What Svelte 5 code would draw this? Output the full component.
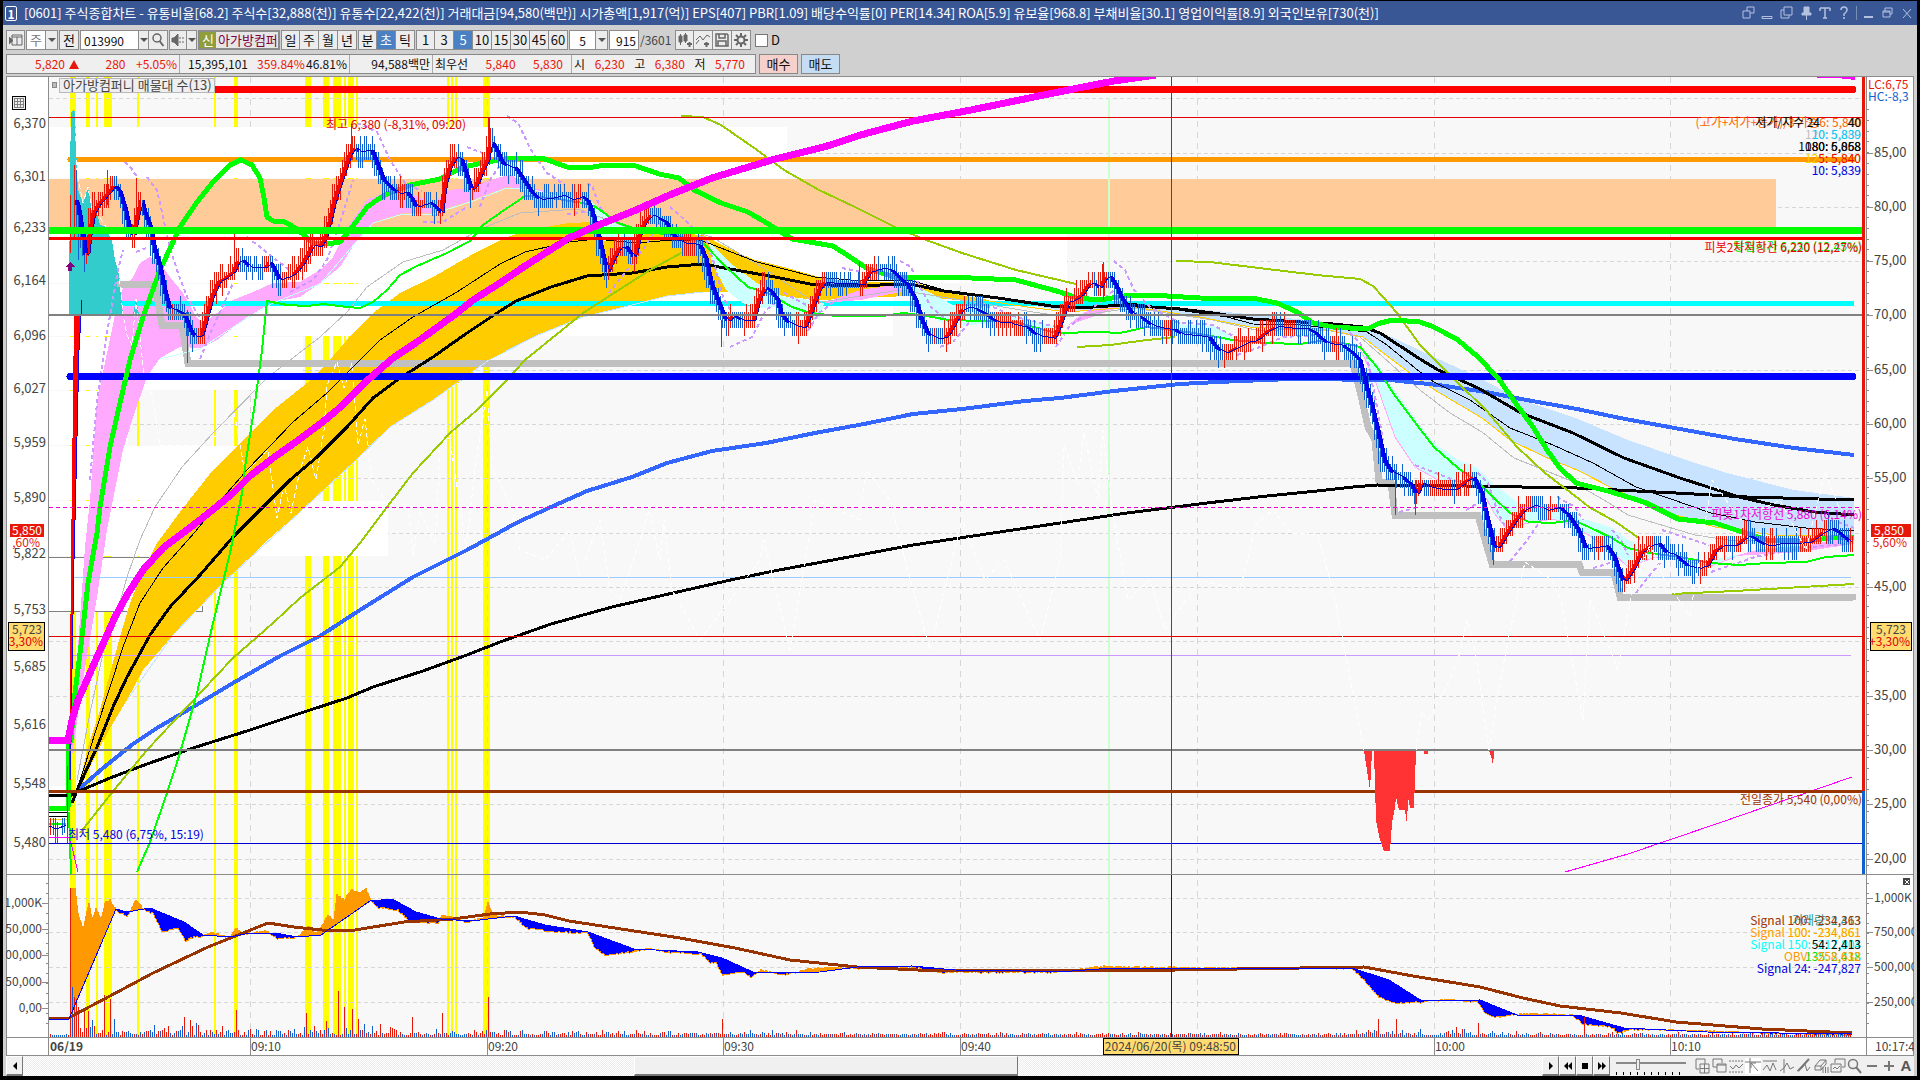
<script>
  const parse = (s) => s.trim().split(/\s+/).map((p) => p.split(',').map(Number));

  function at(points, x) {
    for (let i = 1; i < points.length; i++) {
      if (x <= points[i][0]) {
        const [x0, y0] = points[i - 1];
        const [x1, y1] = points[i];
        return x1 === x0 ? y1 : y0 + ((y1 - y0) * (x - x0)) / (x1 - x0);
      }
    }
    return points[points.length - 1][1];
  }

  const noise = (n) => {
    const v = Math.sin(n * 127.1 + 11.7) * 43758.5453;
    return v - Math.floor(v);
  };

  const price = parse(`75,200 78,215 82,240 85,262 88,235 92,213 98,203 108,192 113,185 118,191 123,207 128,228 132,235 137,210 140,200 144,215 149,228 153,250 158,265 163,290 168,308 175,310 183,315 188,328 193,337 200,335 205,317 210,298 217,282 225,277 232,272 236,262 241,260 248,267 264,267 268,262 272,268 278,280 285,277 293,273 300,265 306,255 311,245 318,247 323,240 328,222 333,200 338,185 343,170 348,155 353,147 358,152 365,150 370,150 376,165 382,180 390,188 396,193 405,192 410,198 415,208 420,205 428,202 435,208 440,213 443,185 448,168 454,157 460,160 465,175 470,190 475,185 480,172 486,160 489,140 495,150 501,163 507,167 513,167 521,178 530,192 537,199 548,198 560,195 570,200 580,196 587,202 593,220 598,240 603,262 606,272 612,258 618,248 624,246 629,253 633,258 638,235 643,222 650,215 657,218 664,222 670,232 676,240 682,243 690,243 698,245 704,258 710,285 717,302 723,318 727,322 731,315 740,320 752,320 757,300 764,287 770,292 776,300 780,315 786,322 795,326 803,328 810,310 817,290 823,282 835,283 850,283 861,285 868,272 880,268 890,270 898,278 906,285 914,300 920,320 927,335 935,338 945,337 952,325 960,310 967,307 975,309 985,315 995,322 1005,322 1015,325 1025,327 1035,335 1045,337 1053,338 1060,320 1066,302 1072,300 1080,295 1087,284 1092,283 1098,288 1104,278 1109,276 1115,287 1121,300 1130,313 1140,318 1150,325 1160,328 1172,329 1180,334 1195,335 1207,337 1217,350 1225,353 1233,348 1245,342 1255,340 1265,332 1275,326 1290,328 1305,328 1315,334 1325,343 1340,345 1350,352 1358,360 1363,380 1370,405 1376,430 1383,462 1390,472 1402,478 1410,485 1415,495 1420,483 1428,487 1440,489 1455,489 1463,482 1472,477 1480,493 1486,520 1492,545 1496,548 1503,537 1512,523 1522,510 1532,505 1545,510 1557,507 1567,515 1577,530 1584,548 1593,547 1605,545 1613,558 1620,578 1623,582 1632,568 1640,552 1650,545 1657,543 1664,552 1675,556 1686,566 1697,568 1706,565 1714,550 1722,545 1735,545 1747,535 1755,540 1765,546 1780,543 1795,543 1808,542 1820,533 1830,528 1838,533 1848,542 1854,541`);

  // One price tick is eight units high, so candles snap to that step
  let upBars = '';
  let downBars = '';
  let upFill = '';
  let downFill = '';
  let fastLine = '';
  for (let x = 76; x <= 1853; x += 2) {
    const y = at(price, x);
    const slope = at(price, x + 3) - at(price, x - 3);
    const reach = 7 + Math.abs(slope) * 0.3;
    const top = Math.round((y - reach - (noise(x) > 0.7 ? 6 : 0)) / 8) * 8;
    const bottom = Math.round((y + reach + (noise(x + 0.5) > 0.7 ? 6 : 0)) / 8) * 8;
    const bar = `M${x}.5 ${top}V${bottom}`;
    const isUp = Math.abs(slope) < 2 ? noise(Math.floor(x / 12)) > 0.5 : slope < 0;
    if (isUp) upBars += bar;
    else downBars += bar;
    const lag = at(price, Math.max(75, x - 4));
    const seg = `M${x} ${y.toFixed(0)}V${lag.toFixed(0)}`;
    if (y < lag - 2) upFill += seg;
    else if (y > lag + 2) downFill += seg;
    fastLine += `${x},${lag.toFixed(0)} `;
  }
  // Session extremes that reach beyond the regular candles
  upBars += 'M70.5 195V253M74.5 165V240M234.5 233V262M351.5 124V160M107.5 170V205M136.5 178V215M488.5 117V160M859.5 262V284M1103.5 262V300';
  downBars += 'M76.5 170V230M78.5 220V260M187.5 310V363M489.5 118V165M721.5 320V347M1395.5 470V515M1415.5 480V515M1493.5 530V565';

  const signal = parse(`49,1019 69,1019 116,909 127,912 150,908 184,922 203,935 230,937 245,934 275,933 297,937 321,935 370,901 392,899 416,912 441,919 471,921 514,916 545,925 588,932 634,949 698,952 722,958 753,972 784,973 820,972 857,967 912,966 955,970 1021,971 1058,972 1113,968 1352,968 1389,980 1422,1001 1480,1000 1517,1015 1578,1015 1624,1028 1707,1032 1851,1034`);
  const obv = parse(`49,1019 69,1019 70,888 75,888 78,913 83,930 89,902 92,920 96,908 101,920 105,903 110,900 116,910 127,917 136,900 144,910 153,913 162,932 178,928 186,942 190,938 203,936 211,932 230,938 236,927 242,934 266,931 276,938 294,938 300,935 309,925 315,933 321,927 328,915 334,920 337,895 344,900 352,889 358,893 366,888 370,899 377,907 398,910 410,922 438,923 442,915 459,919 467,923 484,917 488,902 493,915 514,917 527,928 557,932 588,933 594,947 605,955 631,952 649,948 667,952 701,954 710,963 716,962 722,975 744,972 751,977 761,970 784,975 808,969 833,967 857,968 912,967 943,972 1021,972 1058,972 1105,966 1125,967 1352,968 1367,983 1379,997 1395,1003 1422,1002 1450,999 1477,1002 1487,1015 1499,1017 1514,1015 1529,1013 1572,1015 1583,1024 1612,1027 1618,1033 1633,1029 1716,1031 1762,1033 1851,1035`);
  let obvUp = '';
  let obvDown = '';
  let obvLine = '';
  for (let x = 70; x < 1852; x++) {
    const a = at(obv, x) + (noise(x) - 0.5) * 2;
    const b = at(signal, x);
    if (a < b - 0.5) obvUp += `M${x}.5 ${a.toFixed(0)}V${b.toFixed(0)}`;
    else if (a > b + 0.5) obvDown += `M${x}.5 ${b.toFixed(0)}V${a.toFixed(0)}`;
    obvLine += `${x},${a.toFixed(0)} `;
  }

  const volumePeaks = { 72: 50, 74: 40, 76: 38, 78: 30, 84: 28, 88: 26, 104: 42, 110: 38, 184: 20, 236: 27, 306: 24, 326: 16, 338: 46, 344: 30, 352: 28, 358: 18, 412: 20, 442: 24, 488: 40, 722: 18, 1378: 18, 1396: 18, 1478: 14, 1584: 20 };
  let volUp = '';
  let volDown = '';
  for (let x = 50; x < 1852; x += 2) {
    const busy = x < 70 ? 1 : x < 200 ? 12 : x < 400 ? 8 : x < 800 ? 4 : x > 1355 && x < 1520 ? 5 : 2;
    const h = volumePeaks[x] ?? 2 + Math.round(noise(x) * noise(x + 3) * busy * 1.6);
    const bar = `M${x}.5 ${1037 - h}V1037`;
    if (noise(x + 9) > 0.5 || (volumePeaks[x] && x > 100)) volUp += bar;
    else volDown += bar;
  }

  const stripes = [[70, 6], [86, 4], [96, 2], [104, 8], [137, 2], [214, 2], [234, 4], [305, 6], [323, 6], [333, 8], [344, 2], [348, 6], [356, 2], [447, 2], [451, 2], [455, 2], [483, 7]];
  const profile = [[127, 51, 787], [228, 55, 1067], [284, 52, 893], [337, 53, 303], [391, 54, 128], [446, 54, 303], [501, 55, 388], [557, 54, 202]];
  const gridY = [98, 153, 207, 261, 370, 424, 478, 533, 587, 641, 696, 804, 859, 898, 932, 967, 1002];
  const gridX = [250, 487, 723, 960, 1197, 1434, 1670];

  const leftAxis = [['6,370', 124], ['6,301', 177], ['6,233', 228], ['6,164', 281], ['6,096', 336], ['6,027', 389], ['5,959', 443], ['5,890', 498], ['5,822', 554], ['5,753', 610], ['5,685', 667], ['5,616', 725], ['5,548', 784], ['5,480', 843]];
  const rightAxis = [['85,00', 153], ['80,00', 207], ['75,00', 261], ['70,00', 315], ['65,00', 370], ['60,00', 424], ['55,00', 478], ['45,00', 587], ['35,00', 696], ['30,00', 750], ['25,00', 804], ['20,00', 859]];
  const lowerLeft = [['1,000K', 903], ['50,000', 929], ['00,000', 955], ['50,000', 982], ['0,00', 1008]];
  const lowerRight = [['1,000K', 898], ['750,000', 932], ['500,000', 967], ['250,000', 1002]];
  const times = [['09:10', 251], ['09:20', 488], ['09:30', 724], ['09:40', 961], ['10:00', 1435], ['10:10', 1671]];
  const minorRight = Array.from({ length: 72 }, (_, i) => 109 + i * 10.8).filter((y) => y < 874).map(Math.round);
  const minorLower = Array.from({ length: 15 }, (_, i) => 883 + i * 10);

  const sar = [
    '125,162 131,168 137,177', '147,177 157,190 163,217 170,248 177,270 187,297 200,318', '247,237 288,269', '357,123 377,132 390,160 405,183 422,191',
    '467,147 482,153', '200,359 213,327 227,297 233,283', '290,292 313,280 327,260 340,223 353,180', '423,222 443,222 467,207', '90,480 97,403 107,333 118,270 123,250',
    '136,252 146,248', '507,116 518,123 531,150 547,173 565,185', '567,214 585,212', '480,207 490,180 500,165', '587,184 592,185 596,197 603,213', '609,293 627,270 645,247 660,222',
    '670,207 685,220 708,243 716,270 723,297 730,310', '730,347 752,337 766,310 779,300', '784,293 810,307', '808,331 819,313 837,300', '842,268 862,272',
    '900,261 911,267 920,287 931,307 949,322', '940,347 953,342 971,320', '979,307 993,307 1016,317 1056,327', '1056,347 1069,327 1087,313 1114,290',
    '1114,261 1125,270 1134,290 1150,307 1180,323', '1175,322 1213,325 1237,338', '1237,355 1260,347 1283,337 1320,335', '1350,333 1360,343 1367,357 1377,407 1383,440',
    '1415,465 1456,481', '1399,512 1415,508', '1466,510 1478,503', '1478,473 1488,483 1498,513 1506,528', '1510,561 1525,543 1541,520', '1557,497 1575,507 1583,520',
    '1593,568 1610,563', '1612,530 1621,540 1628,555', '1636,593 1648,577 1660,563', '1662,530 1709,545', '1711,572 1755,557 1802,548 1854,543', '1838,522 1854,528',
  ];

  const olive = [
    '80,833 110,795 147,750 187,707 233,658 273,623 300,598 340,567 360,543 387,507 413,473 450,433 477,410 507,380 525,360 583,313 614,293 650,270 681,253',
    '681,116 703,117 721,125 757,150 784,170 819,190 855,207 895,227 926,240 962,253 1016,270 1076,284',
    '1077,347 1110,345 1147,340 1175,337',
    '1176,261 1210,262 1267,269 1317,275 1360,279 1373,286 1383,297 1397,313 1420,345 1458,383 1486,410 1517,447 1545,473 1579,499 1589,507 1616,522 1640,539',
    '1672,594 1735,591 1802,587 1854,584',
  ];

  const cyanClouds = [
    '583,195 600,208 615,223 636,232 636,238 618,241 603,241 596,225',
    '708,240 730,263 757,283 784,297 810,300 824,303 820,318 810,322 792,320 779,307 757,308 743,303 726,290 712,263',
    '909,283 931,293 953,305 1016,317 1056,327 1064,315 1060,335 1047,337 993,323 949,327 926,313 909,290',
    '1127,305 1160,320 1187,325 1213,325 1233,337 1267,337 1267,341 1233,343 1213,337 1187,332 1160,326',
    '1347,337 1360,350 1377,363 1393,388 1420,425 1434,443 1458,460 1478,468 1494,485 1498,487 1517,502 1537,507 1561,507 1577,517 1597,523 1612,528 1628,540 1656,552 1688,560 1711,560 1751,552 1735,557 1711,566 1680,560 1656,557 1640,563 1628,567 1612,552 1593,538 1573,525 1553,519 1529,523 1506,528 1494,513 1482,490 1474,482 1438,480 1415,467 1395,437 1375,380 1359,347',
  ];

  const titleText = '[0601] 주식종합차트 - 유통비율[68.2] 주식수[32,888(천)] 유통수[22,422(천)] 거래대금[94,580(백만)] 시가총액[1,917(억)] EPS[407] PBR[1.09] 배당수익률[0] PER[14.34] ROA[5.9] 유보율[968.8] 부채비율[30.1] 영업이익률[8.9] 외국인보유[730(천)]';
  const periods = ['일', '주', '월', '년'];
  const units = ['분', '초', '틱'];
  const intervals = ['1', '3', '5', '10', '15', '30', '45', '60'];
</script>

<div class="app">
  <header class="title">
    <span class="badge">1</span>
    <h1>{titleText}</h1>
    <div class="win">
      <svg width="14" height="14" viewBox="0 0 14 14"><path d="M5 1h7v6h-4M1 5h7v7h-7zM5 1v4" /></svg>
      <svg width="14" height="14" viewBox="0 0 14 14"><path d="M1 10.5h10v2h-10z" /></svg>
      <svg width="14" height="14" viewBox="0 0 14 14"><path d="M4 1h8v8h-8zM4 4h-3v8h8v-3" /></svg>
      <svg width="14" height="14" viewBox="0 0 14 14"><path d="M5 1h5v6h2v2h-9v-2h2zM7.500 9v5" class="solid" /></svg>
      <svg width="14" height="14" viewBox="0 0 14 14"><path d="M2 2h10M7 2v10M2 2v3M12 2v3M5 12h4" class="mid" /></svg>
      <svg width="14" height="14" viewBox="0 0 14 14"><path d="M4 4q0-3 3-3t3 3q0 2-3 4v2M7 11v2" class="mid" /></svg>
      <i></i>
      <svg width="14" height="14" viewBox="0 0 14 14"><path d="M2 11h9" class="heavy" /></svg>
      <svg width="14" height="14" viewBox="0 0 14 14"><path d="M4 5v-3h7v6h-2M2 5h7v6h-7zM2 6h7" /></svg>
      <svg width="14" height="14" viewBox="0 0 14 14"><path d="M3 3l8 9M11 3l-8 9" /></svg>
    </div>
  </header>

  <nav class="tools">
    <button class="b w19" aria-label="패널"><svg width="14" height="14" viewBox="0 0 14 14"><path d="M3 2h10v10h-10zM3 4h10M8 4v8" /><path d="M0 4l4 3.500l-4 3.500z" class="fill" /></svg></button>
    <div class="group">
      <button class="b w20 white dim">주</button><button class="b w12" aria-label="주 선택"><span class="caret"></span></button>
    </div>
    <button class="b w20">전</button>
    <div class="group">
      <input class="code" value="013990" aria-label="종목코드" /><button class="b w11" aria-label="종목 목록"><span class="caret"></span></button>
      <button class="b w19" aria-label="검색"><svg width="14" height="14" viewBox="0 0 14 14"><circle cx="6" cy="5" r="4" class="mid" /><path d="M8.500 8l4 5" class="heavy" /></svg></button>
    </div>
    <div class="group">
      <button class="b w18" aria-label="소리"><svg width="14" height="14" viewBox="0 0 14 14"><path d="M1 5h2l4-4v12l-4-4h-2z" class="fill" /><path d="M9 4v6M12 4v6" stroke-dasharray="2 2" /></svg></button><button class="b w11" aria-label="소리 선택"><span class="caret"></span></button>
    </div>
    <button class="stock"><em>신</em><span>아가방컴퍼</span></button>
    <div class="group">{#each periods as p}<button class="b w19">{p}</button>{/each}</div>
    <div class="group">{#each units as u}<button class="b w19" class:on={u === '초'}>{u}</button>{/each}</div>
    <div class="group">{#each intervals as n}<button class="b w19" class:on={n === '5'}>{n}</button>{/each}</div>
    <div class="group"><input class="num" value="5" aria-label="간격" /><button class="b w12" aria-label="간격 목록"><span class="caret"></span></button></div>
    <input class="count" value="915" aria-label="봉 개수" /><span class="total">/3601</span>
    <div class="group icons">
      <button class="b w19" aria-label="캔들"><svg width="16" height="14" viewBox="0 0 16 14"><path d="M2 3h3v6h-3zM7 2h3v6h-3zM3.500 1v11M8.500 0v10" class="fill" /><path d="M10 11h5M12.500 9v5" class="heavy" /></svg></button>
      <button class="b w19" aria-label="지표"><svg width="16" height="14" viewBox="0 0 16 14"><path d="M1 7l4-4 3 4 4-5 3 2M1 11l3-4" /><path d="M9 11h5M11.500 9v5" class="heavy" /></svg></button>
      <button class="b w19" aria-label="저장"><svg width="14" height="14" viewBox="0 0 14 14"><path d="M1 1h11l1 1v11h-12zM4 1v4h6v-4M3 13v-5h8v5" class="mid" /></svg></button>
      <button class="b w19" aria-label="설정"><svg width="14" height="14" viewBox="0 0 14 14"><circle cx="7" cy="7" r="3.500" class="heavy" /><path d="M7 0v3M7 11v3M0 7h3M11 7h3M2 2l2 2M10 10l2 2M12 2l-2 2M4 10l-2 2" class="heavy" /></svg></button>
    </div>
    <label class="check"><input type="checkbox" />D</label>
  </nav>

  <section class="quotes">
    <div class="strip">
      <div class="cell c1 red"><span class="last">5,820<b class="tri"></b></span><span class="chg">280</span><span>+5.05%</span></div>
      <div class="cell c2"><span class="vol">15,395,101</span><span class="red">359.84%</span><span>46.81%</span></div>
      <div class="cell c3"><span>94,588백만</span></div>
      <div class="cell c4"><span>최우선</span><span class="red">5,840</span><span class="red">5,830</span></div>
      <div class="cell c5"><span>시</span><span class="red">6,230</span><span>고</span><span class="red">6,380</span><span>저</span><span class="red">5,770</span></div>
    </div>
    <button class="buy">매수</button>
    <button class="sell">매도</button>
  </section>

  <main>
    <svg class="chart" viewBox="6 76 1908 980" role="img" aria-label="아가방컴퍼니 차트">
      <defs>
        <clipPath id="plot"><rect x="49" y="77" width="1814" height="797" /></clipPath>
      </defs>
      <rect x="6" y="76" width="1908" height="980" fill="#fff" />
      <rect x="49" y="77" width="1817" height="961" fill="#f8f8f8" />

      <g fill="#ff0">{#each stripes as [x, w]}<rect {x} y="77" width={w} height="961" />{/each}</g>
      <g stroke="#d6d6d6" stroke-dasharray="4 3">{#each gridY as y}<path d="M49 {y}.5H1862" />{/each}</g>
      <g stroke="#d6d6d6" stroke-dasharray="6 5">{#each gridX as x}<path d="M{x}.5 77V1038" />{/each}</g>
      <g fill="#fff">{#each profile as [y, h, r]}<rect x="49" {y} width={r - 49} height={h} />{/each}</g>
      <rect x="49" y="786" width="19" height="56" fill="#fff" />
      <path d="M49 557.500H150M49 611.500H202.500V606" class="gray" />
      <rect x="49" y="179" width="1727" height="48" fill="#ffcc99" />
      <rect x="1108" y="98" width="2" height="940" fill="#ccffcc" />

      <g clip-path="url(#plot)">
        <path d="M69 89.500H1853" stroke="#f00" stroke-width="7" stroke-linecap="round" />
        <path d="M70 159.500H1853" stroke="#ff9900" stroke-width="5" stroke-linecap="round" />

        <path class="pink" d="M72 747L78 647L85 547L90 500L97 403L107 353L115 315L123 287L133 277L140 263L150 257L160 263L170 277L183 293L197 318L203 323L217 313L233 300L253 292L273 283L300 282L320 270L333 257L350 223L367 200L383 193L410 193L433 203L450 190L467 188L500 177L511 175L520 180L534 188L565 197L565 200L534 190L507 187L480 197L473 200L447 208L433 213L403 213L373 222L357 240L340 267L320 283L300 297L273 302L247 317L217 340L200 348L180 347L160 358L147 377L133 417L123 450L113 500L107 530L97 597L83 680L72 757Z" />

        <path fill="#ffcc00" d="M78 790L88 747L100 710L110 673L120 637L130 603L143 570L157 543L183 508L213 470L250 433L277 407L307 383L327 363L353 333L377 310L400 293L433 277L473 254L507 237L534 229L569 223L592 222L632 228L672 233L703 235L726 247L752 259L784 267L819 277L851 282L882 282L918 283L944 292L989 300L989 302L944 299L909 296L882 297L846 299L815 300L766 294L730 292L703 292L667 296L632 305L583 317L538 335L489 360L467 377L433 400L390 427L353 463L320 493L300 512L270 538L223 583L173 635L143 670L127 700L110 728L97 753L80 788Z" />
        <path fill="#c8e3ff" d="M1020 303L1120 302L1207 310L1367 326L1383 333L1434 357L1478 377L1521 400L1573 417L1628 440L1680 458L1727 473L1794 490L1854 498V536L1774 535L1715 527L1676 515L1616 490L1577 470L1545 457L1510 440L1482 418L1438 392L1410 373L1383 353L1363 337L1333 331L1250 327L1200 317L1133 307L1067 312Z" />
        <path d="M122 303.500H1854" stroke="#0ff" stroke-width="5" />
        {#each cyanClouds as c}<polygon points={c} fill="#ccffff" />{/each}
        <path fill="#33cccc" d="M69 315L70 170L71 112L73 110L75 112L77 173L78 190L83 203L88 187L92 210L97 213L100 225L106 227L112 240L115 260L119 273L123 315ZM133 315L136 299L139 315Z" />
        <path class="pink" d="M824 303L860 290L900 284L912 286L900 292L860 300ZM1068 325L1085 312L1120 303L1122 306L1090 318ZM1735 556L1760 549L1810 545L1854 536V544L1800 552Z" />
        <path class="silver" d="M120 284H155L162 325H182L188 363.500H1353L1362 400L1368 427L1375 440L1379 482H1391L1395 515H1478L1492 564H1579L1582 572H1614L1620 597H1853" />
        <path class="osc" d="M75 112L77 173L83 203L88 187L92 210L97 213L106 227L112 240L119 273L123 315L127 335L132 345L136 299L144 375L152 395L160 446L205 445L220 432L232 400L245 473L268 450L277 518L284 485L291 513L300 470L308 447L316 480L324 430L327 385L337 362L344 388L352 363L358 445L365 419L372 480L385 500L408 505L413 555L420 510L435 545L441 430L450 440L466 550L475 470L487 390L492 470L500 482L512 510L520 550L545 560L570 530L580 580" />
        <polyline points="703,292 667,296 632,305 583,317 538,335 489,360 433,400 390,427 353,463 300,512 223,583 173,635 127,700" stroke="#c8e3ff" />
        <polyline points="160,359 200,349 247,318 273,303 320,284 357,241 373,223 403,214 433,214 473,201 507,188 534,190 590,205 612,226" stroke="#c8ffff" />

        <path d="M77 780L90 713L103 653L117 613L127 577L140 540L155 507L182 467L213 433L267 378L320 337L347 312L367 287L403 262L443 250L483 228L520 213L578 209L627 227L676 227L712 237L770 272L815 303L900 290L1033 312L1067 317L1133 308L1213 320L1260 331L1317 328L1360 337L1383 357L1420 390L1450 413L1482 432L1514 458L1569 480L1604 500L1628 515L1695 535L1735 541L1854 538" stroke="#bdbdbd" />
        <polyline points="989,301 1027,307 1067,312 1133,307 1200,317 1250,327 1333,331 1363,337 1383,353 1410,373 1438,392 1482,418 1510,440 1545,457 1577,470 1616,490 1676,515 1715,527 1774,535 1854,536" stroke="#ffcc00" />
        <polyline points="1359,347 1375,380 1395,437 1415,467 1438,480 1474,482 1482,490 1494,513 1506,528 1529,523 1553,519 1573,525 1593,538 1612,552 1628,567 1656,557 1680,560 1711,566 1735,557" stroke="#ffaaff" />
        <path d="M73 655.500H1851" stroke="#cc99ff" />
        <path d="M73 577.500H1851" stroke="#99ccff" />

        <polyline stroke-width="4" points="78,790 103,768 133,744 157,728 193,707 233,683 280,656 320,636 360,610 413,577 467,550 500,532 516,523 551,507 587,491 632,477 667,463 712,451 766,443 815,433 864,424 913,414 962,409 1025,401 1060,398 1114,391 1180,384 1217,382 1290,379 1390,380 1438,385 1486,392 1521,399 1577,409 1620,418 1680,429 1735,439 1794,448 1854,455" stroke="#3366ff" />
        <polyline class="w3" points="68,797 77,792 110,778 147,764 193,748 250,730 307,711 347,698 373,687 423,671 467,655 500,642 551,624 612,607 673,593 735,579 779,570 833,560 913,545 993,533 1060,523 1127,513 1207,503 1267,496 1317,491 1353,487 1377,485 1466,486 1577,488 1676,493 1747,497 1854,500" stroke="#000" />
        <polyline class="w3" points="72,803 78,788 97,747 113,707 127,677 150,635 170,607 200,575 233,537 267,503 290,480 317,457 347,427 373,398 400,378 433,357 467,333 500,311 516,301 551,287 587,276 632,273 667,267 703,264 730,269 775,277 810,284 851,286 909,284 944,291 998,298 1051,306 1078,308 1123,305 1180,309 1213,313 1253,319 1300,322 1333,324 1363,327 1380,333 1420,359 1438,370 1478,388 1521,413 1573,433 1624,458 1680,478 1739,497 1774,505 1814,512 1854,515" stroke="#000" />
        <polyline points="77,790 97,727 110,687 123,647 140,603 163,568 195,532 227,493 247,470 293,422 327,393 353,367 380,340 413,317 457,292 500,264 525,252 569,242 596,239 636,243 672,240 703,241 726,250 757,262 784,269 815,277 851,280 909,280 944,290 1080,309 1130,303 1227,317 1253,324 1300,325 1367,332 1387,345 1420,372 1434,382 1470,400 1510,428 1553,445 1593,463 1636,487 1668,498 1711,513 1755,522 1806,528 1854,531" stroke="#000" />

        {#each olive as o}<polyline points={o} class="olive" />{/each}
        {#each sar as s}<polyline points={s} class="sar" />{/each}

        <polyline class="w2 green" points="69,812 71,874" />
        <polyline class="w2 green" points="137,872 150,842 167,793 180,753 197,693 213,623 230,553 242,493 245,467 255,403 262,350 267,301 287,305 307,306 323,304 347,307 360,308 373,302 387,290 400,275 417,266 447,253 470,241 483,225 500,213 525,196 551,198 583,203 596,207 618,223 645,232 676,235 703,243 726,267 748,287 770,294 792,307 810,313 837,316 882,316 904,313 926,316 949,320 1016,322 1056,333 1100,332 1120,333 1147,327 1173,330 1200,334 1233,340 1267,343 1300,344 1320,341 1343,343 1360,347 1377,367 1393,393 1420,429 1434,447 1458,468 1478,482 1494,498 1510,513 1529,522 1553,523 1573,520 1589,527 1612,538 1628,548 1648,553 1680,557 1711,563 1739,565 1767,563 1806,562 1826,557 1854,555" />
        <path d="M70 376.500H1853" stroke="#00f" stroke-width="7" stroke-linecap="round" />
        <polyline class="green" stroke-width="5" points="49,808 68,808 69,745 71,740 75,693 82,637 88,583 97,533 100,507 110,447 120,403 130,360 143,317 160,270 180,227 197,202 213,182 230,165 241,160 252,165 260,178 264,198 267,217 273,221 285,222 297,229 313,243 327,244 340,242 350,230 367,207 383,196 410,185 440,179 463,167 493,161 511,158 542,158 567,167 587,168 605,165 636,166 659,174 679,178 694,190 721,203 748,212 770,225 792,239 833,246 850,257 868,269 895,277 949,277 1016,280 1060,292 1077,298 1100,300 1130,295 1150,295 1200,298 1257,299 1277,303 1297,312 1313,323 1333,327 1367,329 1380,323 1393,320 1420,322 1434,327 1458,340 1478,357 1498,378 1517,405 1533,427 1547,450 1559,467 1576,483 1608,491 1644,502 1678,519 1715,523 1739,531 1767,540 1806,541 1830,538 1854,537" />

        <path d={upBars} stroke="#e81809" />
        <path d={downBars} stroke="#1060d0" />
        <path d={upFill} stroke="#f00" stroke-width="2" />
        <path d={downFill} stroke="#00f" stroke-width="2" />
        <polyline points={fastLine} stroke="#0000c0" />
        <path fill="#f00" d="M74 316H80L78 400L76 480L74 560L71 780H69L71 560L72 480Z" />
        <path d="M82 300L79 350L76 480L74 560L70 780" stroke="#00f" />
        <path d="M70 262l5 5h-3v4h-4v-4h-3z" fill="#800080" />
        <g>
          <path d="M49 795.500H67" stroke="#000" stroke-width="3" />
          <path d="M49 812.500H68M49 816.500H68" stroke="#000" />
          <path d="M49 819.500H68" stroke="#fc0" />
          <path d="M49 823.500H66" stroke="#0f0" stroke-width="2" />
          <path d="M50.500 818V835M55.500 818V843M57.500 822V843M67.500 766V843" stroke="#e81809" />
          <path d="M53.500 818V835M62.500 818V835M64.500 818V833" stroke="#1060d0" />
          <path d="M49 826L57 829L66 825" stroke="#00c" />
        </g>
        <polyline points="49,837 69,838 72,847 78,872" stroke="#f0f" />
        <polyline points="1565,872 1628,854 1719,823 1794,797 1852,777" stroke="#f0f" />

        <path d="M49 230.500H1862" stroke="#0f0" stroke-width="7" />
        <path d="M49 238.500H1862" stroke="#f00" stroke-width="3" />
        <path d="M49 117.500H1862M49 636.500H1862" stroke="#e00000" />
        <path d="M49 315H1862M49 750H1862" stroke="#808080" stroke-width="2" />
        <path d="M49 507.500H1862" stroke="#f000d0" stroke-dasharray="4 3" />
        <path d="M49 791.500H1862" stroke="#993300" stroke-width="3" />
        <path d="M49 843.500H1862" stroke="#0000d0" />
        <path fill="#ff3333" d="M1364 751L1370 790L1372 751ZM1374 751L1376 820L1380 840L1384 851H1390L1392 823L1395 808L1396 797L1399 810H1405L1407 825L1408 797L1410 808H1414L1416 751ZM1424 751h4v3h-4zM1489 751L1492 759L1493 767L1494 751Z" />
        <path class="osc" d="M585 560L600 520L610 590L620 600L640 540L649 510L660 560L664 520L672 590L700 640L760 560L764 540L790 650L815 500L860 520L866 470L890 500L905 560L930 650L962 520L985 580L1004 560L1040 640L1060 560L1064 445L1078 485L1084 432L1098 500L1103 430L1112 510L1128 600L1150 580L1165 630L1200 580L1240 590L1256 524L1273 510L1291 533L1318 535L1335 600L1364 750" />
        <path class="osc" d="M1416 750L1422 712L1428 720L1445 690L1458 660L1467 620L1475 650L1489 750L1497 700L1508 640L1525 562L1552 580L1561 600L1583 720L1590 600L1618 670L1632 590L1650 545L1665 580L1690 616L1712 480L1740 520L1780 500L1806 550L1825 472L1840 510" />
        <polyline class="magenta" points="49,740 68,740 72,720 78,700 87,680 97,657 107,635 115,617 127,595 143,570 163,548 187,530 210,512 233,493 250,476 273,458 300,439 320,424 337,410 370,378 393,358 417,342 457,313 473,300 500,283 525,266 569,238 596,226 636,210 672,194 712,178 775,159 824,147 864,134 913,121 971,110 1034,97 1078,88 1114,81 1156,75" />
        <path d="M1817 76H1838L1855 78" stroke="#f0f" stroke-width="4" />
      </g>

      <rect x="1862" y="77" width="3" height="714" fill="#e81809" />
      <rect x="1862" y="791" width="3" height="83" fill="#1060d0" />
      <path d="M1171.500 77V874" stroke="#f00" />

      <g>
        <path d={obvUp} stroke="#ff9900" />
        <path d={obvDown} stroke="#00f" />
        <polyline points={obvLine} stroke="#ff9900" />
        <path d={volUp} stroke="#e81809" />
        <path d={volDown} stroke="#1060d0" />
        <path d="M70.500 888V1037" stroke="#e81809" />
        <polyline class="w3" points="49,1018 69,1018 72,1016 110,996 153,973 208,947 268,923 294,927 331,931 355,930 404,922 453,919 490,914 520,912 545,915 569,921 680,938 735,948 790,960 857,967 918,970 1058,970 1113,971 1300,968 1364,967 1413,976 1480,987 1523,998 1560,1006 1621,1013 1676,1022 1762,1029 1852,1033" stroke="#993300" />
        <polyline points={signal.map((p) => p.join(',')).join(' ')} stroke="#00f" />
        <path d="M1171.500 875V1037" stroke="#222" />
      </g>

      <g stroke="#8c8c8c">
        <path d="M6.500 1056V76.500H1913.500V1056M48.500 77V1056M1866.500 77V1056M6 874.500H1914M6 1037.500H1914M6 1055.500H1914" />
        {#each times as [, x]}<path d="M{x - 1}.500 1038V1056" />{/each}
        {#each rightAxis as [, y]}<path d="M1867 {y}.5H1873" />{/each}
        {#each minorRight as y}<path d="M1867 {y}.5H1869" />{/each}
        {#each lowerRight as [, y]}<path d="M1867 {y}.5H1873" />{/each}
        {#each lowerLeft as [, y]}<path d="M42 {y}.5H48" />{/each}
        {#each minorLower as y}<path d="M46 {y}.5H48M1867 {y}.5H1869" />{/each}
      </g>

      <g class="t axis end">
        {#each leftAxis as [s, y]}<text x="46" y={y + 4}>{s}</text>{/each}
      </g>
      <g class="t end">
        {#each lowerLeft as [s, y]}<text x="42" y={y + 4}>{s}</text>{/each}
      </g>
      <g class="t axis">
        {#each rightAxis as [s, y]}<text x="1874" y={y + 4}>{s}</text>{/each}
      </g>
      <g class="t">
        {#each lowerRight as [s, y]}<text x="1874" y={y + 4}>{s}</text>{/each}
        {#each times as [s, x]}<text {x} y="1051">{s}</text>{/each}
        <text x="50" y="1051" font-weight="700">06/19</text>
        <text x="1875" y="1051">10:17:4</text>
        <text x="1868" y="89" fill="#e81809">LC:6,75</text>
        <text x="1868" y="101" fill="#1060d0">HC:-8,3</text>
      </g>

      <rect x="10" y="524" width="34" height="13" fill="#e81809" />
      <rect x="1871" y="524" width="40" height="13" fill="#e81809" />
      <rect x="8.500" y="622.500" width="36" height="28" class="tag" />
      <rect x="1870.500" y="622.500" width="41" height="28" class="tag" />
      <rect x="1103.500" y="1038.500" width="135" height="16" class="tag" />
      <g class="t end">
        <text x="42" y="535" fill="#fff">5,850</text>
        <text x="1904" y="535" fill="#fff">5,850</text>
        <text x="1907" y="547" fill="#e81809">5,60%</text>
        <text x="40" y="547" fill="#e81809">,60%</text>
        <text x="42" y="634">5,723</text>
        <text x="1906" y="634">5,723</text>
        <text x="1910" y="646" fill="#e00000">+3,30%</text>
        <text x="43" y="646" fill="#e00000">3,30%</text>
        <text x="1236" y="1051">2024/06/20(목) 09:48:50</text>
      </g>

      <rect x="59.500" y="78.500" width="155" height="14" fill="#efefef" stroke="#b8b8b8" />
      <rect x="52.500" y="82.500" width="4" height="5" fill="#bbb" stroke="#888" />
      <g class="t axis"><text x="63" y="90">아가방컴퍼니 매물대 수(13)</text></g>
      <path d="M12.500 96.500h13v13h-13z" fill="#eee" stroke="#000" />
      <path d="M14.500 98.500h9v9h-9zM14 101.500h9M14 104.500h9M17.500 98v9M20.500 98v9" class="gray" />

      <g class="t">
        <text x="326" y="129" fill="#e00000">최고 6,380 (-8,31%, 09:20)</text>
        <text x="68" y="839" fill="#0000e0">최저 5,480 (6,75%, 15:19)</text>
      </g>
      <g class="t end">
        <text x="1862" y="127" fill="#ff6600">(고가+저가+종가)/3 가중6: 5,840</text>
        <text x="1820" y="127" fill="#000">저가/지수 24</text>
        <text x="1861" y="127" fill="#000">40</text>
        <text x="1861" y="139" fill="#c0c0c0">120: 5,880</text>
        <text x="1861" y="139" fill="#00ccff">10: 5,839</text>
        <text x="1861" y="151" fill="#000">1080: 6,058</text>
        <text x="1861" y="151" fill="#000">180: 5,868</text>
        <text x="1861" y="163" fill="#ffcc00">120: 5,840</text>
        <text x="1861" y="163" fill="#ee0000">5: 5,840</text>
        <text x="1861" y="175" fill="#c8e3ff">30: 5,839</text>
        <text x="1861" y="175" fill="#0000e0">10: 5,839</text>
        <text x="1862" y="251" fill="#00e000">당일시가 6,230 (12,45%)</text>
        <text x="1862" y="252" fill="#ee0000">피봇2차저항선 6,220 (12,27%)</text>
        <text x="1862" y="519" fill="#f000d0">피봇1차저항선 5,880 (6,14%)</text>
        <text x="1862" y="804" fill="#993300">전일종가 5,540 (0,00%)</text>
        <text x="1861" y="925" fill="#339999">거래량: 2,413</text>
        <text x="1861" y="925" fill="#993300">Signal 100: -234,363</text>
        <text x="1861" y="937" fill="#ffff00">20: -234,861</text>
        <text x="1861" y="937" fill="#ff9900">Signal 100: -234,861</text>
        <text x="1861" y="949" fill="#00ffff">Signal 150: -217,804</text>
        <text x="1861" y="949" fill="#000">54: 2,413</text>
        <text x="1861" y="961" fill="#00e000">135: 2,418</text>
        <text x="1861" y="961" fill="#ff9900">OBV: -258,632</text>
        <text x="1861" y="973" fill="#0000e0">Signal 24: -247,827</text>
      </g>
      <path d="M1903.500 878.500h6v6h-6z" fill="#444" stroke="#444" />
      <path d="M1905 880l4 4M1909 880l-4 4" stroke="#fff" />
    </svg>
  </main>

  <footer class="bottom">
    <button class="arrow" aria-label="왼쪽으로"><svg width="8" height="10" viewBox="0 0 8 10"><path d="M6 1v8l-4-4z" class="ink" /></svg></button>
    <div class="track"><div class="thumb"></div></div>
    <div class="play">
      <button aria-label="재생"><svg width="10" height="10" viewBox="0 0 10 10"><path d="M3 1v8l4-4z" class="ink" /></svg></button>
      <button aria-label="뒤로"><svg width="10" height="10" viewBox="0 0 10 10"><path d="M5 1v8l-4-4zM9 1v8l-4-4z" class="ink" /></svg></button>
      <button aria-label="정지"><svg width="10" height="10" viewBox="0 0 10 10"><path d="M2 2h6v6h-6z" class="ink" /></svg></button>
      <button aria-label="앞으로"><svg width="10" height="10" viewBox="0 0 10 10"><path d="M1 1v8l4-4zM5 1v8l4-4z" class="ink" /></svg></button>
    </div>
    <input class="speed" type="range" min="0" max="10" value="3" aria-label="속도" />
    <div class="draw">
      <svg viewBox="0 0 16 16"><path d="M2 1h9v5M2 1v10h3M6 6h9v9h-9zM10.500 6v9M6 10.500h9" /></svg>
      <svg viewBox="0 0 16 16"><path d="M2 1h9v4M2 1v8h4M6 6h9v8h-9zM6 7h9" /></svg>
      <svg viewBox="0 0 16 16"><path d="M1 3h14M1 14h14" stroke-dasharray="2 1" /><path d="M2 8l3 3 3-4 3 3 4-4" /></svg>
      <svg viewBox="0 0 16 16" class="lit"><path d="M0 4h16M5 0v15M6 5l7 8M6 5h5M6 5v5" /></svg>
      <svg viewBox="0 0 16 16"><path d="M1 3h14M1 12l4-5 3 6 3-8 3 7" /></svg>
      <svg viewBox="0 0 16 16"><path d="M5 1v14M1 13l4-3 3-5 3 6 4-2" /></svg>
      <svg viewBox="0 0 16 16"><path d="M2 13l11-12" class="heavy" /><path d="M1 13l5-3 3-4 2 7 3-4" /></svg>
      <svg viewBox="0 0 16 16"><path d="M2 8l5-6h6l-5 6zM2 8v4h6v-4M8 12l5-6v-4M10 9v6M12.500 9v6M15 9v6" /></svg>
      <svg viewBox="0 0 16 16"><path d="M5 1h10v8h-3M5 1v4M1 6h10v8h-10zM3 11l2-2 2 2 3-3" /></svg>
      <svg viewBox="0 0 16 16"><circle cx="6" cy="6" r="4.500" class="mid" /><path d="M9 9l5 6" class="heavy" /></svg>
      <svg viewBox="0 0 16 16"><path d="M3 8h10" class="heavy" /></svg>
      <svg viewBox="0 0 16 16"><path d="M3 8h10M8 3v10" class="heavy" /></svg>
      <b>A</b>
    </div>
  </footer>
</div>

<style>
  :global(body) { margin: 0; background: #000; }
  .app {
    box-sizing: border-box;
    min-height: 100vh;
    border: solid #000;
    border-width: 1px 3px 4px;
    background: #d0d0d0;
    display: flex;
    flex-direction: column;
    font: 13px/16px "Noto Sans CJK KR", sans-serif;
    color: #111;
  }
  button, input { font: inherit; color: inherit; box-sizing: border-box; margin: 0; padding: 0; border-radius: 0; }
  svg { display: block; fill: none; stroke-width: 1; }
  .title { height: 24px; background: #3a5795; color: #fff; display: flex; align-items: center; padding: 0 3px 0 2px; gap: 7px; }
  .badge { width: 10px; height: 13px; line-height: 13px; border: 1px solid #fff; border-radius: 2px; text-align: center; font-size: 12px; font-weight: 700; }
  h1 { margin: 0; flex: 1; font-size: 13px; line-height: 20px; font-weight: 400; white-space: pre; }
  .win { display: flex; align-items: center; gap: 5px; }
  .win svg { stroke: #b4c2e0; }
  .win .solid { fill: #b4c2e0; }
  .win i { width: 1px; height: 14px; background: #7a8db5; }
  .mid { stroke-width: 1.5; }
  .heavy { stroke-width: 2; }

  .tools { height: 20px; margin-top: 5px; padding-left: 3px; display: flex; align-items: stretch; gap: 1px; color: #111; }
  .group { display: flex; }
  .b { border: 1px solid #8c8c8c; background: #ececec; display: flex; align-items: center; justify-content: center; }
  .group .b + .b, .group input + .b { border-left-width: 0; }
  .w11 { width: 10px; }
  .w12 { width: 12px; }
  .w18 { width: 18px; }
  .w19 { width: 19px; }
  .w20 { width: 20px; }
  .white { background: #fff; }
  .dim { color: #777; }
  .b svg { stroke: #666; }
  .b .fill { fill: #666; }
  .on { background: #4a80c4; color: #fff; }
  .caret { border: 4px solid transparent; border-top-color: #555; border-bottom: 0; }
  .tools input:not([type]) { border: 1px solid #8c8c8c; background: #fff; height: 20px; font-size: 12px; }
  .tools .code { width: 59px; padding-left: 3px; }
  .num { width: 27px; text-align: center; }
  .tools .count { width: 30px; text-align: right; padding-right: 2px; }
  .total { width: 34px; line-height: 20px; font-size: 12px; color: #444; }
  .stock { width: 82px; display: flex; align-items: center; gap: 2px; border: 2px solid #8c8c8c; background: #e6e6e6; color: #800040; white-space: nowrap; }
  .stock em { font-style: normal; background: #8f9d3a; color: #fff; width: 16px; text-align: center; }
  .check { display: flex; align-items: center; gap: 3px; margin-left: 3px; }
  .check input { appearance: none; width: 13px; height: 13px; border: 1px solid #777; background: #fff; }

  .quotes { display: flex; gap: 3px; height: 20px; margin: 4px 0 2px; padding-left: 3px; }
  .strip { display: flex; box-sizing: border-box; border: 1px solid #888; background: #efefef; width: 750px; font-size: 12px; }
  .cell { display: flex; justify-content: space-between; align-items: center; box-sizing: border-box; padding: 0 2px; white-space: nowrap; }
  .cell + .cell { border-left: 1px solid #aaa; }
  .c1 { width: 172px; padding-left: 28px; }
  .chg { margin-left: 16px; }
  .c2 { width: 170px; padding-left: 8px; }
  .vol { margin-right: 8px; }
  .c3 { width: 83px; justify-content: flex-end; }
  .c4 { width: 139px; padding-right: 8px; }
  .c5 { flex: 1; padding-right: 10px; }
  .red { color: #e81809; }
  .last { display: flex; align-items: center; gap: 4px; }
  .tri { border: 5px solid transparent; border-bottom: 9px solid #e81809; border-top: 0; }
  .buy, .sell { width: 39px; border: 1px solid #888; background: #f6d0ca; }
  .sell { background: #c5ddf2; }

  main { margin: 0 3px; }
  .chart { width: 100%; height: auto; shape-rendering: crispEdges; }
  .w2 { stroke-width: 2; }
  .w3 { stroke-width: 3; }
  .green { stroke: #0f0; }
  .gray { stroke: #808080; }
  .pink { fill: #ffaaff; }
  .silver { stroke: #c0c0c0; stroke-width: 7; stroke-linecap: round; }
  .osc { stroke: #fff; stroke-dasharray: 5 3; }
  .olive { stroke: #99cc00; stroke-width: 2; }
  .sar { stroke: #cc99ff; stroke-width: 2; stroke-dasharray: 4 3; }
  .magenta { stroke: #f0f; stroke-width: 7; }
  .tag { fill: #ffdb70; stroke: #000; }
  .t { fill: #444; font-size: 12px; }
  .axis { font-size: 13px; }
  .end { text-anchor: end; }

  .bottom { flex: 1; min-height: 19px; max-height: 20px; margin: 0 3px; background: #f0f0f0; display: flex; align-items: stretch; }
  .arrow, .play button { background: #f0f0f0; border: 1px solid #fff; border-right-color: #777; border-bottom: 2px solid #777; display: flex; align-items: center; justify-content: center; }
  .arrow { width: 17px; }
  .ink { fill: #000; }
  .track { flex: 1; background: repeating-conic-gradient(#fff 0 25%, #ececec 0 50%) 0 0 / 2px 2px; display: flex; }
  .thumb { box-sizing: border-box; width: 25.3%; margin-left: 40.2%; background: #f0f0f0; border: 1px solid #fff; border-right-color: #777; border-bottom: 2px solid #777; }
  .play { display: flex; }
  .play button { width: 17px; }
  .speed { appearance: none; width: 70px; margin: 0 8px 0 6px; background: repeating-linear-gradient(90deg, #000 0 1px, transparent 1px 7px) 0 16px / 70px 3px no-repeat, linear-gradient(#888, #888) 0 6px / 70px 2px no-repeat; }
  .speed::-webkit-slider-thumb { appearance: none; width: 4px; height: 11px; background: #eee; border: 1px solid #888; margin-top: -4px; }
  .draw { display: flex; align-items: center; gap: 1px; }
  .draw svg { width: 16px; height: 16px; stroke: #777; }
  .draw .lit { background: #fff; }
  .draw b { width: 16px; text-align: center; font-size: 15px; color: #555; font-family: "Liberation Sans", sans-serif; }
</style>
